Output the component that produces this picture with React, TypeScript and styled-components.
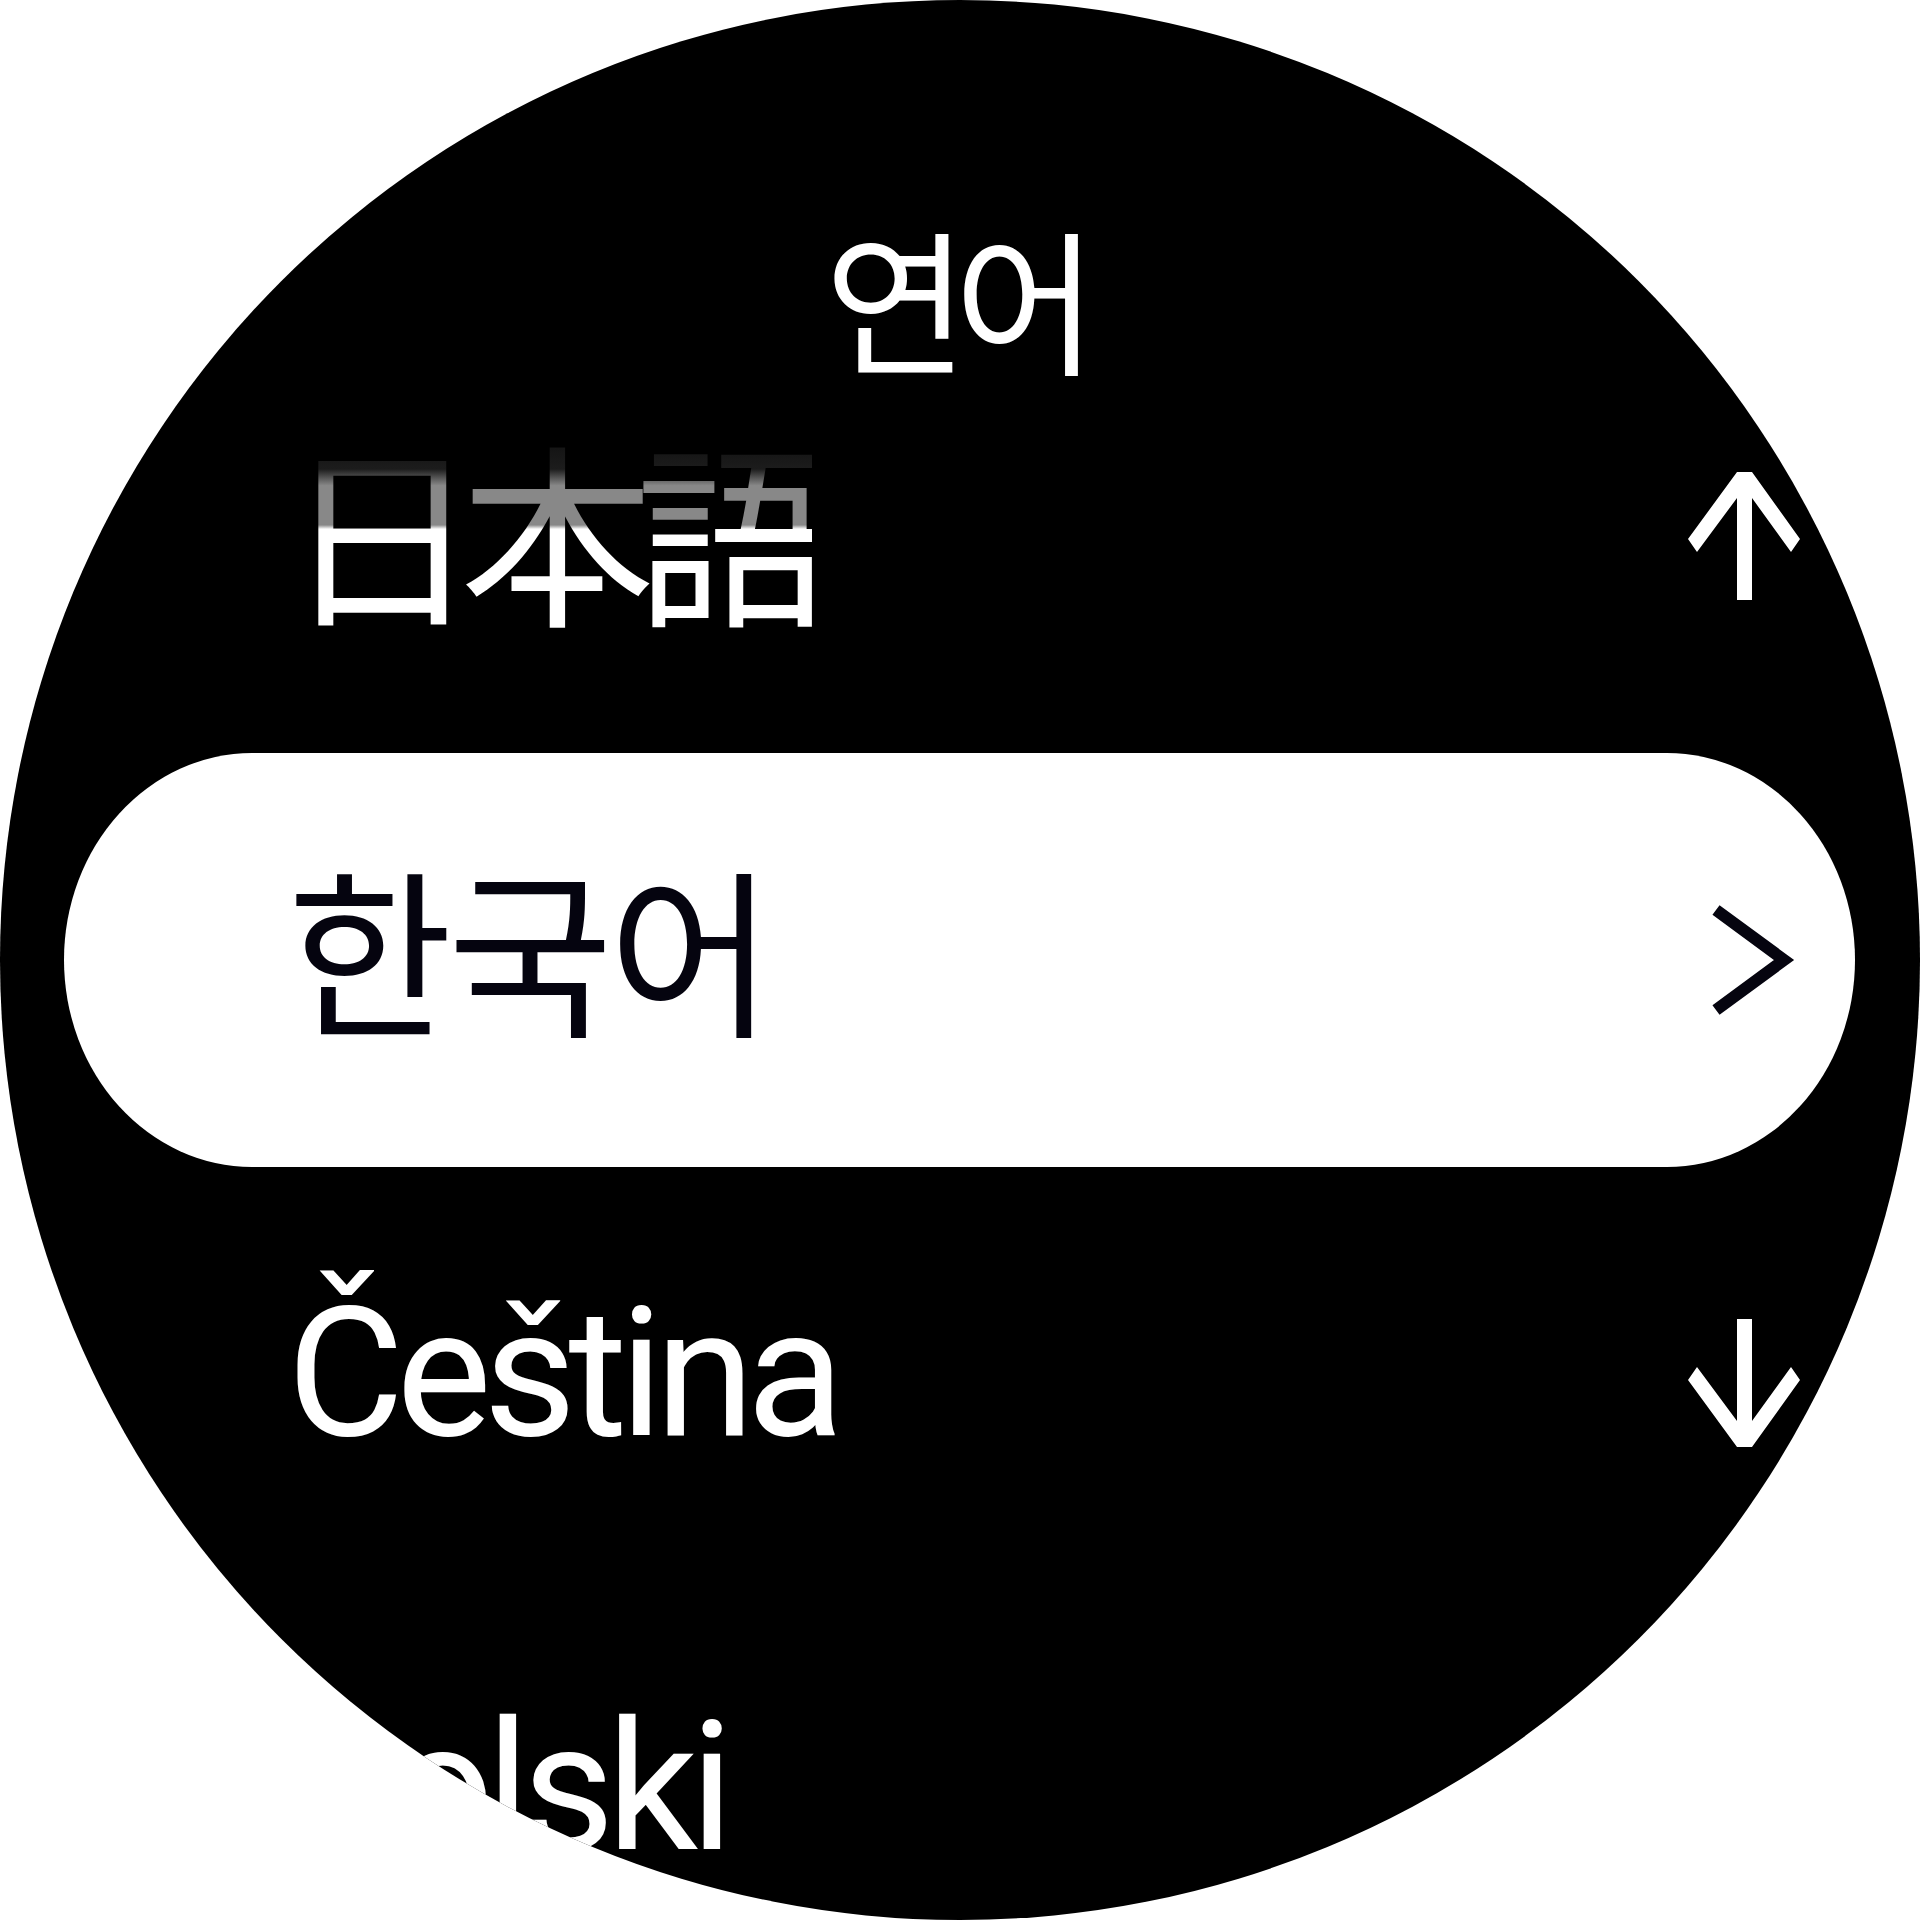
import styled, { createGlobalStyle } from "styled-components";

const GlobalStyle = createGlobalStyle`
  html, body {
    margin: 0;
    padding: 0;
    background: #ffffff;
  }
`;

const Watch = styled.div`
  width: 1920px;
  height: 1920px;
  border-radius: 50%;
  background: #000000;
  overflow: hidden;
  display: flex;
  flex-direction: column;
`;

const Title = styled.div`
  box-sizing: border-box;
  height: 339px;
  flex-shrink: 0;
  padding-top: 215px;
  padding-right: 12px;
  text-align: center;
  color: #ffffff;
  font-family: "Noto Sans CJK KR", "Noto Sans", sans-serif;
  font-size: 156px;
  line-height: 160px;
  letter-spacing: -14px;
`;

const Row = styled.div<{ $selected?: boolean }>`
  box-sizing: border-box;
  height: 414px;
  flex-shrink: 0;
  display: flex;
  align-items: center;
  justify-content: space-between;
  margin: ${(p) => (p.$selected ? "0 65px 0 64px" : "0")};
  padding: ${(p) => (p.$selected ? "0 55px 0 232px" : "0 120px 0 296px")};
  background: ${(p) => (p.$selected ? "#ffffff" : "transparent")};
  border-radius: ${(p) => (p.$selected ? "188px / 207px" : "0")};
  color: ${(p) => (p.$selected ? "#05040f" : "#ffffff")};
`;

// plain latin label
const Label = styled.span`
  display: inline-block;
  white-space: nowrap;
  font-family: Roboto, "Noto Sans", sans-serif;
  font-size: 180px;
  line-height: 414px;
  letter-spacing: -8px;
  margin-left: -9px;
`;

// cjk label, glyphs sit a bit low in the line box so lift them
const CjkLabel = styled.span<{ $size: number; $spacing: number; $lift: number; $indent: number }>`
  display: inline-block;
  white-space: nowrap;
  font-family: "Noto Sans CJK KR", "Noto Sans CJK JP", sans-serif;
  font-size: ${(p) => p.$size}px;
  line-height: 414px;
  letter-spacing: ${(p) => p.$spacing}px;
  margin-left: ${(p) => p.$indent}px;
  margin-bottom: ${(p) => p.$lift * 2}px;
`;

// item scrolling out at the top: upper half dimmed
const FadedLabel = styled(CjkLabel)`
  background: linear-gradient(
    to bottom,
    #151515 0%,
    #151515 31%,
    #1c1c1c 36%,
    #888888 40%,
    #888888 49.5%,
    #ffffff 50.5%,
    #ffffff 100%
  );
  -webkit-background-clip: text;
  background-clip: text;
  color: transparent;
`;

const Icon = styled.svg<{ $shift?: number }>`
  display: block;
  flex-shrink: 0;
  overflow: visible;
  transform: translateY(${(p) => p.$shift ?? 0}px);
`;

const ArrowUp = () => (
  <Icon width="112" height="128" viewBox="0 0 112 128" $shift={-10}>
    <polygon
      fill="#ffffff"
      points="49,0 64,0 112,67 103,80 64,26 64,128 49,128 49,26 9,80 0,67"
    />
  </Icon>
);

const ArrowDown = () => (
  <Icon width="112" height="128" viewBox="0 0 112 128" $shift={9}>
    <polygon
      fill="#ffffff"
      points="49,128 64,128 112,61 103,48 64,102 64,0 49,0 49,102 9,48 0,61"
    />
  </Icon>
);

const Chevron = () => (
  <Icon width="112" height="112" viewBox="0 0 112 112">
    <path
      d="M28 6 L96 56 L28 106"
      fill="none"
      stroke="#05040f"
      strokeWidth="12"
    />
  </Icon>
);

export default function App() {
  return (
    <>
      <GlobalStyle />
      <Watch>
        <Title>연어</Title>
        <Row>
          <FadedLabel lang="ja" $size={195} $spacing={-19} $lift={19} $indent={-12}>
            日本語
          </FadedLabel>
          <ArrowUp />
        </Row>
        <Row $selected>
          <CjkLabel lang="ko" $size={180} $spacing={-5} $lift={15} $indent={-9}>
            한국어
          </CjkLabel>
          <Chevron />
        </Row>
        <Row>
          <Label>Čeština</Label>
          <ArrowDown />
        </Row>
        <Row>
          <Label>Polski</Label>
        </Row>
      </Watch>
    </>
  );
}
